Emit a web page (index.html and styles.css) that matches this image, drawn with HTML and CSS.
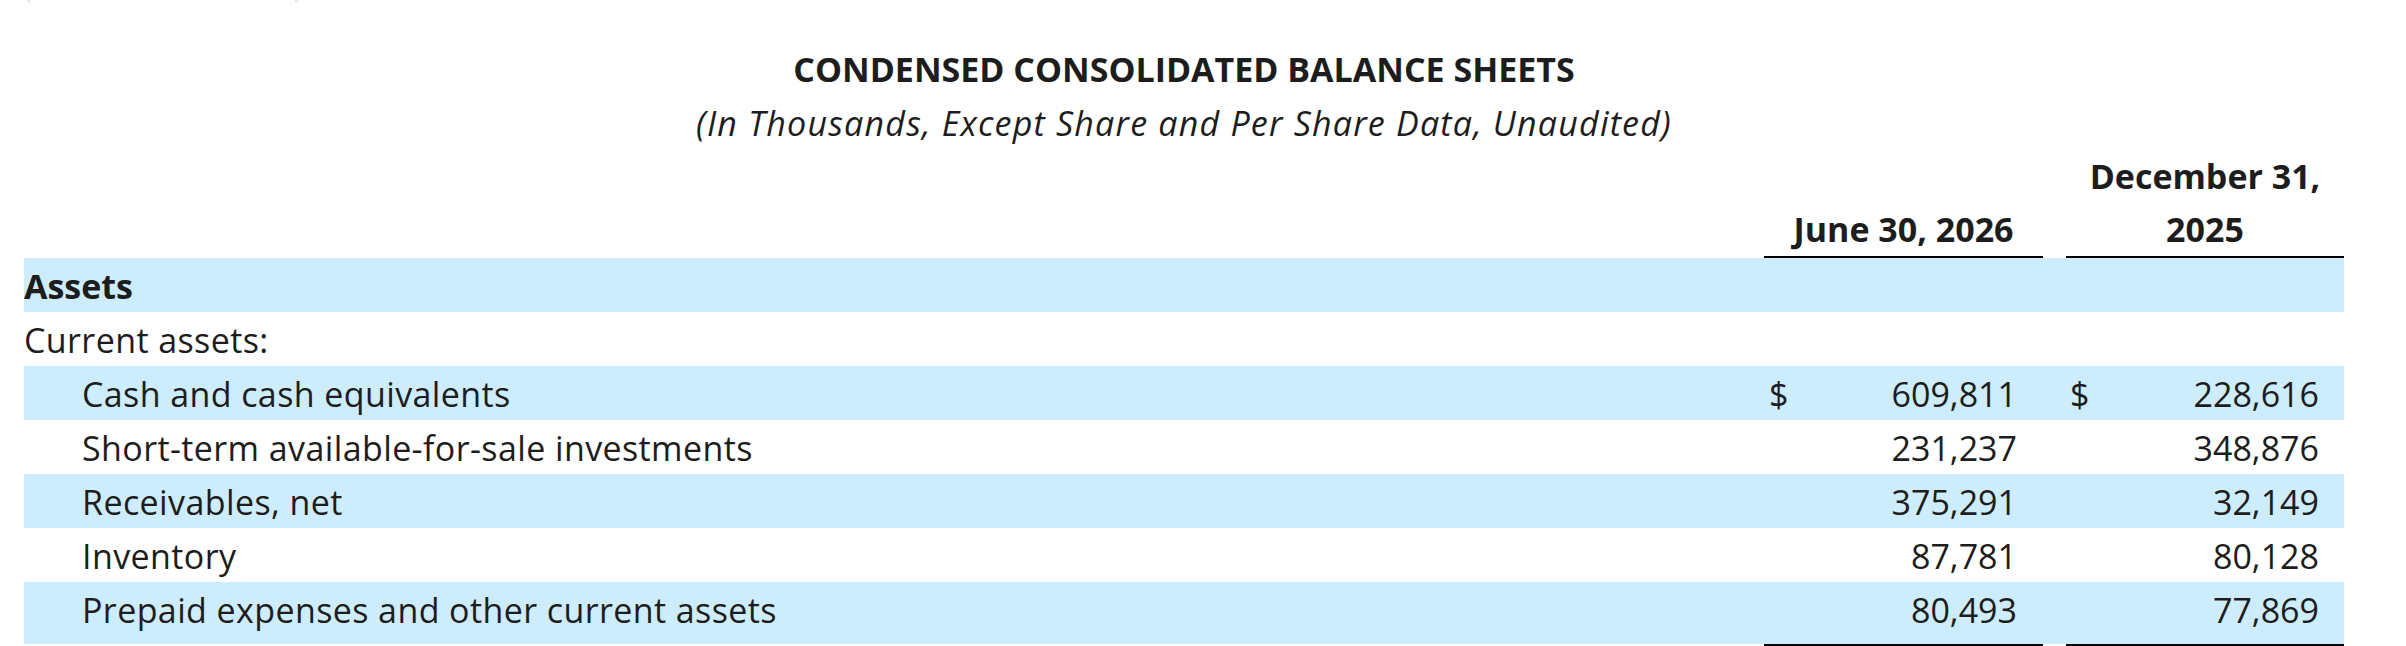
FILE: index.html
```html
<!DOCTYPE html>
<html lang="en">
<head>
<meta charset="utf-8">
<title>Condensed Consolidated Balance Sheets</title>
<link rel="stylesheet" href="styles.css">
</head>
<body>
<div class="page">
  <div class="clip"></div>
  <h1 class="title">CONDENSED CONSOLIDATED BALANCE SHEETS</h1>
  <p class="subtitle">(In Thousands, Except Share and Per Share Data, Unaudited)</p>

  <div class="sheet">
    <div class="row head">
      <div class="label"></div>
      <div class="col-head">June 30, 2026</div>
      <div class="gap"></div>
      <div class="col-head">December 31,<br>2025</div>
    </div>

    <div class="row band">
      <div class="label section">Assets</div>
      <div class="amt"></div><div class="gap"></div><div class="amt"></div>
    </div>

    <div class="row">
      <div class="label">Current assets:</div>
      <div class="amt"></div><div class="gap"></div><div class="amt"></div>
    </div>

    <div class="row band">
      <div class="label indent">Cash and cash equivalents</div>
      <div class="amt"><span class="cur">$</span><span class="num">609,811</span></div>
      <div class="gap"></div>
      <div class="amt amt-b"><span class="cur">$</span><span class="num">228,616</span></div>
    </div>

    <div class="row">
      <div class="label indent">Short-term available-for-sale investments</div>
      <div class="amt"><span class="num">231,237</span></div>
      <div class="gap"></div>
      <div class="amt amt-b"><span class="num">348,876</span></div>
    </div>

    <div class="row band">
      <div class="label indent">Receivables, net</div>
      <div class="amt"><span class="num">375,291</span></div>
      <div class="gap"></div>
      <div class="amt amt-b"><span class="num">32,149</span></div>
    </div>

    <div class="row">
      <div class="label indent">Inventory</div>
      <div class="amt"><span class="num">87,781</span></div>
      <div class="gap"></div>
      <div class="amt amt-b"><span class="num">80,128</span></div>
    </div>

    <div class="row band last">
      <div class="label indent">Prepaid expenses and other current assets</div>
      <div class="amt"><span class="num">80,493</span></div>
      <div class="gap"></div>
      <div class="amt amt-b"><span class="num">77,869</span></div>
    </div>

    <div class="row rules">
      <div></div>
      <div class="rule"></div>
      <div></div>
      <div class="rule"></div>
    </div>
  </div>
</div>
</body>
</html>
```

FILE: styles.css
```css
html, body {
  margin: 0;
  padding: 0;
  background: #ffffff;
}

body {
  font-family: "Open Sans", "Liberation Sans", sans-serif;
  font-size: 34px;
  color: #1d1d1d;
}

.page {
  padding: 0 62px 0 24px;
}

.clip {
  width: 265px;
  height: 2px;
  margin-left: 3px;
  border-left: 3px solid #e4e4e4;
  border-right: 3px solid #e4e4e4;
}

.title {
  margin: 40px 0 0;
  font-size: 34px;
  font-weight: 700;
  line-height: 54px;
  text-align: center;
}

.subtitle {
  margin: 0;
  font-style: italic;
  line-height: 54px;
  letter-spacing: 1.2px;
  text-align: center;
}

.sheet {
  width: 2320px;
}

.row {
  display: grid;
  grid-template-columns: 1740px 279px 23px 278px;
  height: 54px;
}

.row > div {
  padding-top: 2px;
  line-height: 52px;
  white-space: nowrap;
}

.band {
  background: #cdecfc;
}

.row.head {
  height: auto;
  align-items: end;
}

.row.head > div {
  padding-top: 0;
}

.col-head {
  font-weight: 700;
  line-height: 53px !important;
  text-align: center;
  border-bottom: 2px solid #000;
}

.label {
  letter-spacing: 0.4px;
}

.label.section {
  font-weight: 700;
  letter-spacing: 0;
}

.label.indent {
  padding-left: 58px;
}

.amt {
  display: flex;
  justify-content: space-between;
  padding-left: 5px;
  padding-right: 26px;
}

.amt-b {
  padding-left: 4px;
  padding-right: 25px;
}

.amt .num {
  margin-left: auto;
}

.row.last {
  height: 62px;
}

.row.rules {
  height: 2px;
}

.row.rules > div {
  padding: 0;
  line-height: 0;
}

.rule {
  height: 2px;
  background: #000;
}
```
